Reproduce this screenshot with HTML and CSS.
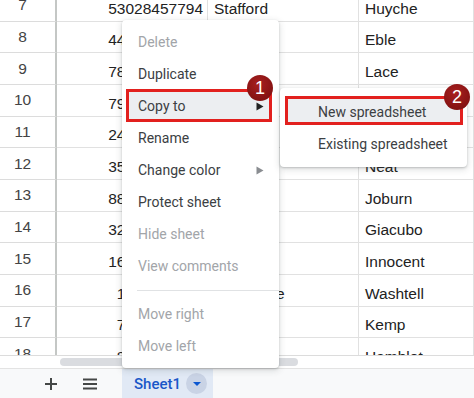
FILE: index.html
```html
<!DOCTYPE html>
<html>
<head>
<meta charset="utf-8">
<link rel="stylesheet" href="styles.css">
</head>
<body>
<div class="app">
  <div class="sheet">
    <div class="grid">
      <div class="row"><div class="rh">7</div><div class="c num">53028457794</div><div class="c">Stafford</div><div class="c">Huyche</div></div>
      <div class="row"><div class="rh">8</div><div class="c num">44195620378</div><div class="c">Berne</div><div class="c">Eble</div></div>
      <div class="row"><div class="rh">9</div><div class="c num">78430051926</div><div class="c">Lyle</div><div class="c">Lace</div></div>
      <div class="row"><div class="rh">10</div><div class="c num">79216384570</div><div class="c">Dara</div><div class="c">Mabbot</div></div>
      <div class="row"><div class="rh">11</div><div class="c num">24870913365</div><div class="c">Cody</div><div class="c">Corran</div></div>
      <div class="row"><div class="rh">12</div><div class="c num">35609472818</div><div class="c">Ross</div><div class="c">Neat</div></div>
      <div class="row"><div class="rh">13</div><div class="c num">88314706259</div><div class="c">Nell</div><div class="c">Joburn</div></div>
      <div class="row"><div class="rh">14</div><div class="c num">32957018463</div><div class="c">Ivor</div><div class="c">Giacubo</div></div>
      <div class="row"><div class="rh">15</div><div class="c num">16702849531</div><div class="c">Otto</div><div class="c">Innocent</div></div>
      <div class="row"><div class="rh">16</div><div class="c num">1458203967</div><div class="c">Josephine</div><div class="c">Washtell</div></div>
      <div class="row"><div class="rh">17</div><div class="c num">7320591846</div><div class="c">Alda</div><div class="c">Kemp</div></div>
      <div class="row"><div class="rh">18</div><div class="c num">8904173625</div><div class="c">Burt</div><div class="c">Hamblet</div></div>
    </div>
  </div>
  <div class="hscroll"><div class="thumb"></div></div>
  <div class="tabbar">
    <span class="tb-icon add"><svg width="14" height="14" viewBox="0 0 14 14"><path d="M7 1v12M1 7h12" stroke="#444746" stroke-width="2" fill="none"/></svg></span>
    <span class="tb-icon list"><svg width="16" height="14" viewBox="0 0 16 14"><path d="M1 2.5h14M1 7h14M1 11.5h14" stroke="#444746" stroke-width="2" fill="none"/></svg></span>
    <div class="tab"><span class="tab-name">Sheet1</span><span class="tab-dd"><svg width="10" height="6" viewBox="0 0 10 6"><path d="M1 1h8L5 5z" fill="#0b57d0"/></svg></span></div>
  </div>

  <div class="menu">
    <div class="mi dis">Delete</div>
    <div class="mi">Duplicate</div>
    <div class="mi hl">Copy to<span class="arrow"><svg width="8" height="9" viewBox="0 0 8 9"><path d="M0.5 0.5L7.5 4.5L0.5 8.5z" fill="#222"/></svg></span></div>
    <div class="mi">Rename</div>
    <div class="mi">Change color<span class="arrow"><svg width="8" height="9" viewBox="0 0 8 9"><path d="M0.5 0.5L7.5 4.5L0.5 8.5z" fill="#8a8d91"/></svg></span></div>
    <div class="mi">Protect sheet</div>
    <div class="mi dis">Hide sheet</div>
    <div class="mi dis">View comments</div>
    <div class="sep"></div>
    <div class="mi dis">Move right</div>
    <div class="mi dis">Move left</div>
  </div>

  <div class="submenu">
    <div class="si hl">New spreadsheet</div>
    <div class="si">Existing spreadsheet</div>
  </div>

  <div class="badge b1">1</div>
  <div class="badge b2">2</div>
</div>
</body>
</html>
```

FILE: styles.css
```css
* { box-sizing: border-box; }

body {
  margin: 0;
  width: 474px;
  height: 398px;
  overflow: hidden;
  background: #fff;
  font-family: "Liberation Sans", Arial, sans-serif;
}

.app {
  position: relative;
  width: 474px;
  height: 398px;
  overflow: hidden;
  display: flex;
  flex-direction: column;
}

.sheet {
  flex: none;
  height: 355px;
  overflow: hidden;
}

.grid {
  margin: -10px 0 0 -10px;
}

.row {
  display: grid;
  grid-template-columns: 67px 151px 151px 1fr;
  height: 31.67px;
}

.rh {
  border-right: 2px solid #c4c7c5;
  border-bottom: 1px solid #dcdcdc;
  display: flex;
  align-items: center;
  justify-content: center;
  color: #444;
  font-size: 15.5px;
}

.c {
  border-right: 1px solid #e1e1e1;
  border-bottom: 1px solid #e1e1e1;
  display: flex;
  align-items: flex-end;
  padding: 0 6px 3px 6px;
  font-size: 15.5px;
  line-height: 18px;
  color: #222;
  white-space: nowrap;
  overflow: hidden;
}

.c.num {
  justify-content: flex-end;
  padding-right: 4px;
}

.hscroll {
  flex: none;
  height: 13px;
  border-top: 1px solid #dcdcdc;
  display: flex;
  align-items: center;
  padding-left: 60px;
}

.thumb {
  width: 238px;
  height: 8px;
  border-radius: 4px;
  background: #dadce0;
}

.tabbar {
  flex: none;
  height: 30px;
  border-top: 1px solid #e3e3e3;
  background: #f8f9fa;
  display: flex;
  align-items: stretch;
}

.tb-icon {
  display: flex;
  align-items: center;
  justify-content: center;
}

.add {
  margin-left: 44px;
  width: 14px;
}

.list {
  margin-left: 24px;
  width: 16px;
}

.tab {
  margin-left: 24px;
  width: 91px;
  background: #e1e9f5;
  display: flex;
  align-items: center;
  padding-left: 12px;
}

.tab-name {
  font-family: Roboto, "Liberation Sans", sans-serif;
  font-weight: 500;
  font-size: 15px;
  color: #1a57c8;
}

.tab-dd {
  margin-left: 5px;
  width: 21px;
  height: 21px;
  border-radius: 50%;
  background: #c9d3e5;
  display: flex;
  align-items: center;
  justify-content: center;
}

.menu {
  position: absolute;
  left: 122px;
  top: 20px;
  width: 157px;
  padding: 6px 0;
  background: #fff;
  border-radius: 4px;
  box-shadow: 0 2px 6px 1px rgba(60, 64, 67, 0.15), 0 1px 2px rgba(60, 64, 67, 0.25);
  font-family: Roboto, "Liberation Sans", sans-serif;
  font-size: 14px;
  color: #3c4043;
}

.mi {
  height: 32px;
  display: flex;
  align-items: center;
  padding-left: 16px;
  white-space: nowrap;
}

.mi.dis {
  color: #a2a5a9;
}

.arrow {
  margin-left: auto;
  margin-right: 15px;
  display: flex;
  align-items: center;
}

.sep {
  height: 16px;
  margin-left: 15px;
  display: flex;
  align-items: center;
}

.sep::before {
  content: "";
  display: block;
  width: 100%;
  height: 1px;
  background: #e0e2e4;
}

.hl {
  position: relative;
  z-index: 0;
}

.mi.hl::before {
  content: "";
  position: absolute;
  left: 4px;
  right: 7px;
  top: -1px;
  bottom: 0;
  border: 3px solid #e2201e;
  background: #eceef1;
  z-index: -1;
}

.submenu {
  position: absolute;
  left: 280px;
  top: 88px;
  width: 187px;
  padding: 8px 0 7px;
  background: #fff;
  border-radius: 4px;
  box-shadow: 0 2px 6px 1px rgba(60, 64, 67, 0.15), 0 1px 2px rgba(60, 64, 67, 0.25);
  font-family: Roboto, "Liberation Sans", sans-serif;
  font-size: 14px;
  color: #3c4043;
}

.si {
  height: 32px;
  display: flex;
  align-items: center;
  padding-left: 38px;
  white-space: nowrap;
}

.si.hl::before {
  content: "";
  position: absolute;
  left: 5px;
  right: 4px;
  top: 0;
  bottom: 3px;
  border: 3px solid #e2201e;
  background: #eceef1;
  z-index: -1;
}

.badge {
  position: absolute;
  width: 26px;
  height: 26px;
  border-radius: 50%;
  background: radial-gradient(circle at 45% 35%, #a82020 0%, #8a1414 60%, #741010 100%);
  color: #fff;
  font-family: "Liberation Sans", Arial, sans-serif;
  font-size: 18px;
  display: flex;
  align-items: center;
  justify-content: center;
}

.b1 {
  left: 247px;
  top: 75px;
}

.b2 {
  left: 444px;
  top: 84px;
}
```
